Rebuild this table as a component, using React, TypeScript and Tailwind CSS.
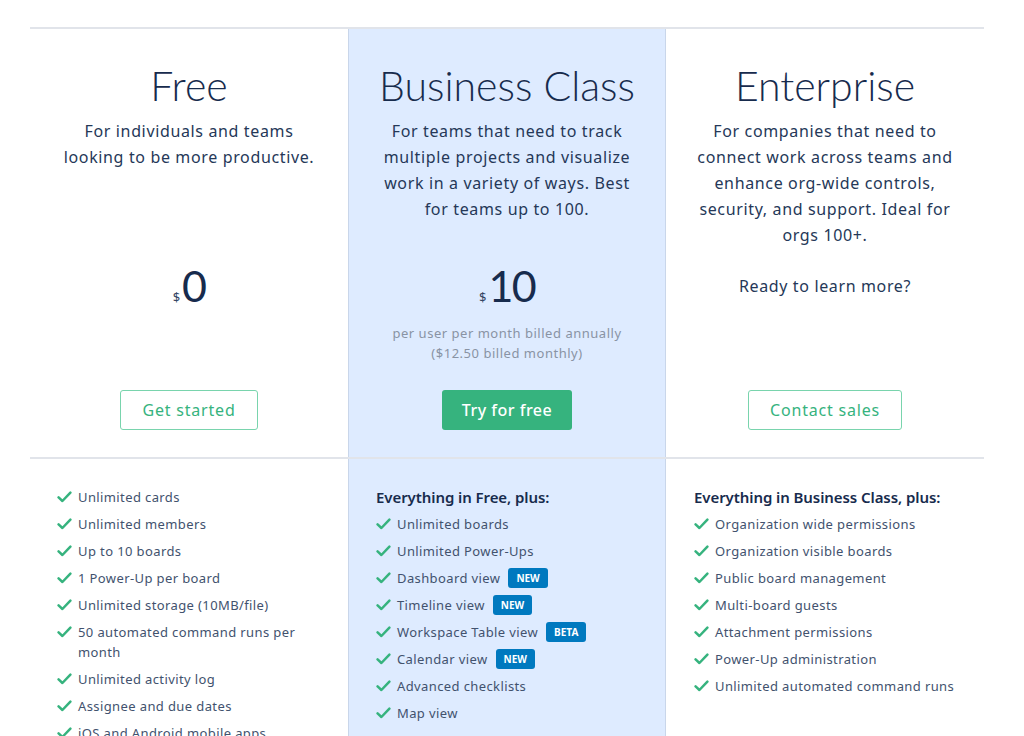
import { Fragment } from "react";

const BODY_FONT = { fontFamily: "'Noto Sans', 'Open Sans', sans-serif" };
const DISPLAY_FONT = { fontFamily: "Lato, 'Noto Sans', sans-serif" };

type Feature = { text: string; badge?: string };

const freeFeatures: Feature[] = [
  { text: "Unlimited cards" },
  { text: "Unlimited members" },
  { text: "Up to 10 boards" },
  { text: "1 Power-Up per board" },
  { text: "Unlimited storage (10MB/file)" },
  { text: "50 automated command runs per month" },
  { text: "Unlimited activity log" },
  { text: "Assignee and due dates" },
  { text: "iOS and Android mobile apps" },
];

const businessFeatures: Feature[] = [
  { text: "Unlimited boards" },
  { text: "Unlimited Power-Ups" },
  { text: "Dashboard view", badge: "NEW" },
  { text: "Timeline view", badge: "NEW" },
  { text: "Workspace Table view", badge: "BETA" },
  { text: "Calendar view", badge: "NEW" },
  { text: "Advanced checklists" },
  { text: "Map view" },
];

const enterpriseFeatures: Feature[] = [
  { text: "Organization wide permissions" },
  { text: "Organization visible boards" },
  { text: "Public board management" },
  { text: "Multi-board guests" },
  { text: "Attachment permissions" },
  { text: "Power-Up administration" },
  { text: "Unlimited automated command runs" },
];

function Check() {
  return (
    <svg width="15" height="12" viewBox="0 0 15 12" className="shrink-0 mt-[4px]">
      <path d="M1.6 6.4 L5.4 10 L13.4 1.6" fill="none" stroke="#36b37e" strokeWidth="2.5" strokeLinecap="round" strokeLinejoin="round" />
    </svg>
  );
}

function FeatureList({ items, heading }: { items: Feature[]; heading?: string }) {
  return (
    <ul className="flex flex-col gap-[7px]">
      {heading && (
        <li className="text-[15px] leading-[20px] font-semibold tracking-[-0.005em] text-[#172b4d]">{heading}</li>
      )}
      {items.map((f) => (
        <li key={f.text} className="flex items-start gap-[6px] text-[13px] leading-[20px] tracking-[0.03em] text-[#42526e]">
          <Check />
          <span className="flex items-center">
            <span>{f.text}</span>
            {f.badge && (
              <span className="ml-[8px] shrink-0 inline-flex items-center h-[20px] px-[8px] rounded-[3px] bg-[#0079bf] text-white text-[10px] font-bold tracking-normal leading-none">
                {f.badge}
              </span>
            )}
          </span>
        </li>
      ))}
    </ul>
  );
}

function Lines({ text }: { text: string }) {
  return (
    <>
      {text.split("\n").map((l, i) => (
        <Fragment key={i}>
          {i > 0 && <br />}
          {l}
        </Fragment>
      ))}
    </>
  );
}

function Column({
  title,
  desc,
  price,
  note,
  cta,
  primary,
  highlight,
}: {
  title: string;
  desc: string;
  price?: string;
  note?: string;
  cta: string;
  primary?: boolean;
  highlight?: boolean;
}) {
  return (
    <div className={`flex flex-col items-center pt-[33px] pb-[27px] text-center ${highlight ? "bg-[#deebff] border-x border-[#c9d6ea]" : ""}`}>
      <h2 className="text-[41px] leading-[48px] font-light text-[#172b4d]" style={DISPLAY_FONT}>{title}</h2>
      <p className="mt-[8px] h-[138px] whitespace-nowrap text-[16px] leading-[26px] tracking-[0.04em] text-[#253858]">
        <Lines text={desc} />
      </p>
      <div className="mt-[6px] h-[128px] flex flex-col items-center">
        {price !== undefined ? (
          <>
            <div className="flex items-baseline h-[48px] text-[#172b4d]">
              <span className="text-[13px] mr-[2px] text-[#344563]">$</span>
              <span className="text-[43px] leading-[48px] font-normal tracking-[-0.04em]" style={DISPLAY_FONT}>{price}</span>
            </div>
            {note && (
              <p className="mt-[13px] text-[13px] leading-[20px] tracking-[0.04em] text-[#8993a4]">
                <Lines text={note} />
              </p>
            )}
          </>
        ) : (
          <p className="text-[16px] leading-[48px] tracking-[0.04em] text-[#253858]">Ready to learn more?</p>
        )}
      </div>
      {primary ? (
        <button className="h-[40px] w-[130px] rounded-[3px] bg-[#36b37e] text-white text-[16px] font-medium tracking-[0.03em]">
          {cta}
        </button>
      ) : (
        <button className="h-[40px] px-[21px] rounded-[3px] border border-[#79d4ad] bg-white text-[#36b37e] text-[16px] tracking-[0.05em]">
          {cta}
        </button>
      )}
    </div>
  );
}

export default function App() {
  return (
    <div className="min-h-screen bg-white pt-[27px]" style={BODY_FONT}>
      <div className="ml-[30px] w-[954px] border-t-2 border-[#e1e4ea]">
        <div className="grid grid-cols-3 border-b-2 border-[#e1e4ea]">
          <Column
            title="Free"
            desc={"For individuals and teams\nlooking to be more productive."}
            price="0"
            cta="Get started"
          />
          <Column
            title="Business Class"
            desc={"For teams that need to track\nmultiple projects and visualize\nwork in a variety of ways. Best\nfor teams up to 100."}
            price="10"
            note={"per user per month billed annually\n($12.50 billed monthly)"}
            cta="Try for free"
            primary
            highlight
          />
          <Column
            title="Enterprise"
            desc={"For companies that need to\nconnect work across teams and\nenhance org-wide controls,\nsecurity, and support. Ideal for\norgs 100+."}
            cta="Contact sales"
          />
        </div>
        <div className="grid grid-cols-3">
          <div className="pt-[28px] pl-[27px] pr-[40px]">
            <FeatureList items={freeFeatures} />
          </div>
          <div className="pt-[28px] pl-[27px] pr-[20px] bg-[#deebff] border-x border-[#c9d6ea] min-h-[300px]">
            <FeatureList items={businessFeatures} heading="Everything in Free, plus:" />
          </div>
          <div className="pt-[28px] pl-[28px] pr-[16px]">
            <FeatureList items={enterpriseFeatures} heading="Everything in Business Class, plus:" />
          </div>
        </div>
      </div>
    </div>
  );
}
